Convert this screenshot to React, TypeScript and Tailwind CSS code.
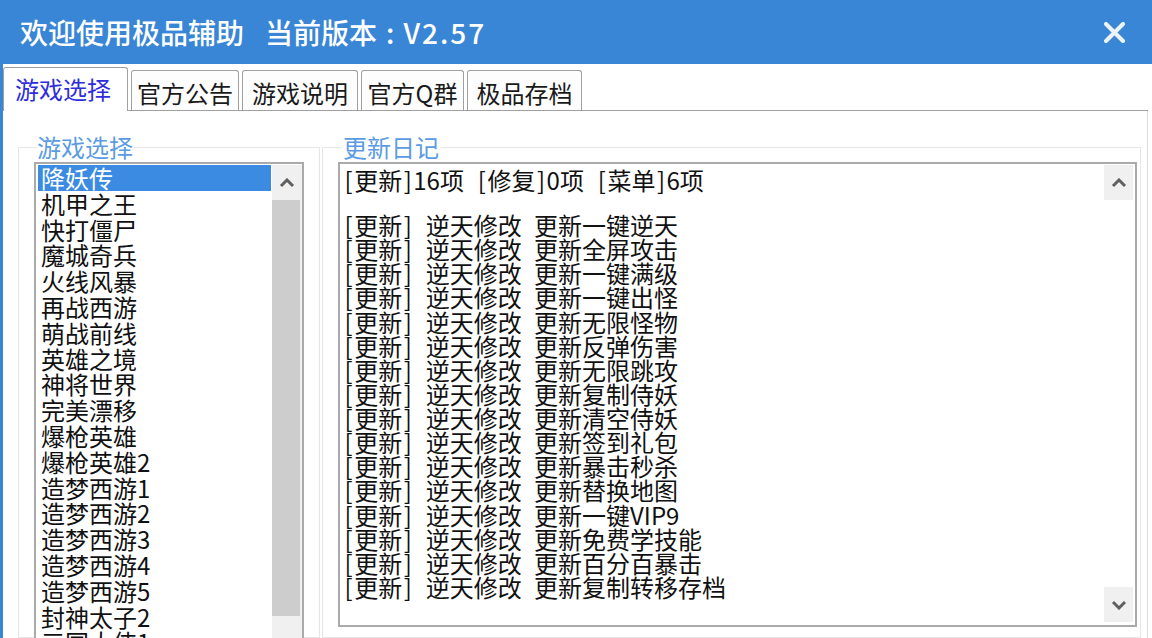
import React from "react";

const FONT = "font-['Noto_Sans_CJK_SC','Noto_Sans',sans-serif]";

const TABS = [
  { name: "游戏选择", w: "w-[125px]", active: true },
  { name: "官方公告", w: "w-[108px]" },
  { name: "游戏说明", w: "w-[116px]" },
  { name: "官方Q群", w: "w-[103px]" },
  { name: "极品存档", w: "w-[115px]" },
];

const GAMES = [
  "降妖传",
  "机甲之王",
  "快打僵尸",
  "魔城奇兵",
  "火线风暴",
  "再战西游",
  "萌战前线",
  "英雄之境",
  "神将世界",
  "完美漂移",
  "爆枪英雄",
  "爆枪英雄2",
  "造梦西游1",
  "造梦西游2",
  "造梦西游3",
  "造梦西游4",
  "造梦西游5",
  "封神太子2",
  "三国大侠1",
];

const UPDATES = [
  "一键逆天",
  "全屏攻击",
  "一键满级",
  "一键出怪",
  "无限怪物",
  "反弹伤害",
  "无限跳攻",
  "复制侍妖",
  "清空侍妖",
  "签到礼包",
  "暴击秒杀",
  "替换地图",
  "一键VIP9",
  "免费学技能",
  "百分百暴击",
  "复制转移存档",
];

function Chevron({ down }: { down?: boolean }) {
  return (
    <svg width="16" height="10" viewBox="0 0 16 10">
      <polyline
        points={down ? "2,2 8,8 14,2" : "2,8 8,2 14,8"}
        fill="none"
        stroke="#606060"
        strokeWidth="3"
      />
    </svg>
  );
}

function ScrollButton({ down }: { down?: boolean }) {
  return (
    <div className="flex h-[35px] items-center justify-center bg-[#f0f0f0]">
      <Chevron down={down} />
    </div>
  );
}

// SimSun-ish spacing: brackets and blanks are half a glyph wide
function LogLine({ text }: { text: string }) {
  return (
    <>
      {text.split("").map((ch, i) =>
        ch === "[" || ch === "]" ? (
          <span key={i} className="px-[1.5px]">
            {ch}
          </span>
        ) : (
          <React.Fragment key={i}>{ch}</React.Fragment>
        )
      )}
    </>
  );
}

export default function App() {
  return (
    <div className={`h-[638px] w-[1152px] overflow-hidden bg-white ${FONT}`}>
      {/* title bar */}
      <header className="flex h-[64px] items-center justify-between bg-[#3a86d6] pl-[20px] pr-[27px] text-white">
        <h1 className="text-[28px] font-medium leading-none">
          欢迎使用极品辅助<span className="ml-[21px]">当前版本</span>
          <span className="mx-[9px]">:</span>
          <span className="tracking-[2px]">V2.57</span>
        </h1>
        <svg width="21" height="21" viewBox="0 0 21 21">
          <path d="M2 2 L19 19 M19 2 L2 19" stroke="#eef3fb" strokeWidth="4" strokeLinecap="round" />
        </svg>
      </header>

      <div className="flex h-[574px] flex-col border-l-[3px] border-[#3a86d6]">
        {/* tabs */}
        <div className="mr-[4px] flex h-[47px] items-end gap-[3px] border-b border-[#a0a0a0] bg-white">
          {TABS.map((t) =>
            t.active ? (
              <div
                key={t.name}
                className={`${t.w} relative -mb-px flex h-[44px] items-center rounded-t-[3px] border border-b-0 border-[#a0a0a0] bg-white pb-[1px] pl-[11px] text-[24px] text-[#2d2ddc]`}
              >
                {t.name}
              </div>
            ) : (
              <div
                key={t.name}
                className={`${t.w} flex h-[40px] items-center justify-center rounded-t-[3px] border border-b-0 border-[#a0a0a0] bg-[#fdfdfd] pt-[4px] text-[24px] text-[#1a1a1a]`}
              >
                {t.name}
              </div>
            )
          )}
        </div>

        {/* panel */}
        <div className="mr-[4px] flex flex-1 gap-[2px] overflow-hidden border-r border-[#dcdcdc] pl-[15px] pt-[24px]">
          <fieldset className="w-[302px] shrink-0 border border-[#e6e6e6] px-[15px]">
            <legend className="ml-[2px] px-[1px] text-[24px] leading-[24px] text-[#5b9be3]">游戏选择</legend>
            <div className="mt-[3px] flex h-[490px] border-2 border-[#aaaaaa] bg-white">
              <ul className="flex-1 pl-[2px] pr-[1px] pt-[1px] text-[24px] leading-[25.8px] text-[#111]">
                {GAMES.map((g, i) => (
                  <li
                    key={g}
                    className={`h-[25.8px] whitespace-nowrap pl-[3px] ${i === 0 ? "bg-[#3c8be2] text-white" : ""}`}
                  >
                    {g}
                  </li>
                ))}
              </ul>
              <div className="mt-[1px] flex w-[30px] flex-col bg-[#f0f0f0]">
                <ScrollButton />
                <div className="mr-[2px] h-[416px] bg-[#cdcdcd]" />
              </div>
            </div>
          </fieldset>

          <fieldset className="w-[819px] shrink-0 border border-[#e6e6e6] pl-[15px] pr-[3px]">
            <legend className="ml-[3px] px-[2px] text-[24px] leading-[24px] text-[#5b9be3]">更新日记</legend>
            <div className="mt-[3px] flex h-[465px] border-2 border-[#aaaaaa] bg-white">
              <div className="flex-1 whitespace-pre pl-[3px] pt-[4px] text-[24px] text-[#111] [word-spacing:7px]">
                <div className="h-[22.5px] leading-[24px]">
                  <LogLine text="[更新]16项 [修复]0项 [菜单]6项" />
                </div>
                <div className="h-[22.5px]" />
                {UPDATES.map((u) => (
                  <div key={u} className="h-[24.13px] leading-[24.13px]">
                    <LogLine text={`[更新] 逆天修改 更新${u}`} />
                  </div>
                ))}
              </div>
              <div className="mr-[2px] mt-[1px] flex w-[29px] flex-col justify-between pb-[3px]">
                <ScrollButton />
                <ScrollButton down />
              </div>
            </div>
          </fieldset>
        </div>
      </div>
    </div>
  );
}
